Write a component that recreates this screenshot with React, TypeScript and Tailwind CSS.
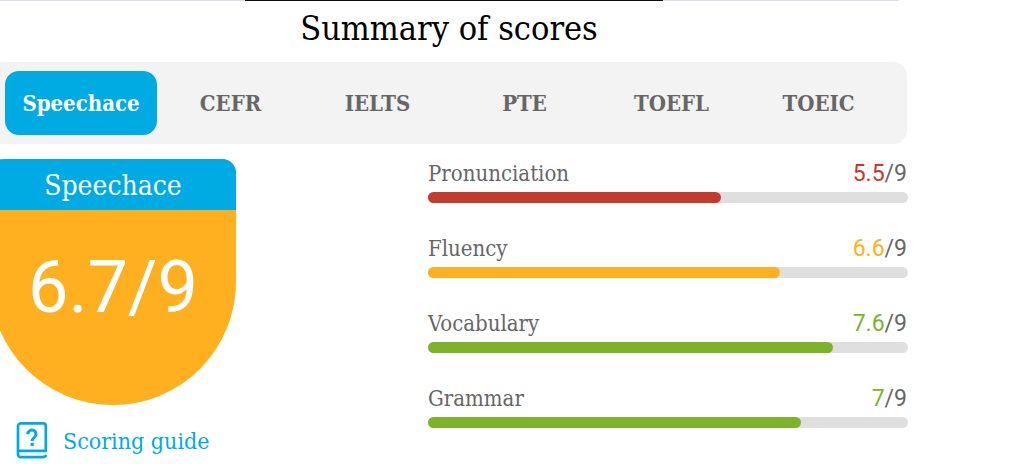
import { useState } from "react";

const tabs = ["Speechace", "CEFR", "IELTS", "PTE", "TOEFL", "TOEIC"];

const maxScore = 9;

const scores = [
  { name: "Pronunciation", value: 5.5, text: "text-[#c23b2c]", bar: "bg-[#c23b2c]" },
  { name: "Fluency", value: 6.6, text: "text-[#ffb020]", bar: "bg-[#ffb020]" },
  { name: "Vocabulary", value: 7.6, text: "text-[#7db32b]", bar: "bg-[#7db32b]" },
  { name: "Grammar", value: 7, text: "text-[#7db32b]", bar: "bg-[#7db32b]" },
];

function GuideIcon() {
  return (
    <svg
      width="32"
      height="38"
      viewBox="0 0 32 38"
      fill="none"
      stroke="currentColor"
      strokeWidth="2.7"
      strokeLinecap="round"
      aria-hidden="true"
    >
      <path d="M29.800 28.300V3.900a2.600 2.600 0 0 0-2.600-2.600H4.900A2.900 2.900 0 0 0 2 4.200v28a2.900 2.900 0 0 0 2.900 2.900h21.600c1.700 0 2.700-.4 3.400-1.200" />
      <path d="M2.500 28.900H29.500" />
      <path d="M11.800 12.200a4.100 4.100 0 1 1 6.600 3.200c-1.500 1.200-2.200 1.800-2.200 3.600" strokeWidth="3" strokeLinecap="butt" />
      <path d="M14.600 22.400h3.200" strokeWidth="3" strokeLinecap="butt" />
    </svg>
  );
}

export default function App() {
  const [active, setActive] = useState("Speechace");

  return (
    <div className="overflow-hidden bg-white font-['Roboto_Slab','DejaVu_Serif_Condensed','DejaVu_Serif',serif] text-[#666]">
      <main className="-ml-2.5 pr-[116px]">
        <div className="mr-[9px] flex h-px bg-[#dcdee8]">
          <div className="w-[255px]" />
          <div className="w-[418px] bg-[#100c0e]" />
        </div>
        <h1 className="flex h-[61px] items-center justify-center pb-2 text-[34px] leading-10 text-black">
          Summary of scores
        </h1>

        <nav className="mr-px flex rounded-[14px] bg-[#f3f3f3] px-[15px] py-[9px]" aria-label="Score scales">
          {tabs.map((tab) => (
            <button
              key={tab}
              type="button"
              aria-pressed={tab === active}
              onClick={() => setActive(tab)}
              className={
                "h-16 w-[147px] rounded-[14px] text-[22px] font-bold leading-8 first:w-[152px] " +
                (tab === active ? "bg-[#00abe3] text-white" : "text-[#666]")
              }
            >
              {tab}
            </button>
          ))}
        </nav>

        <div className="flex items-start justify-between pt-[15px]">
          <section className="w-[246px]">
            <div className="overflow-hidden rounded-t-[14px] rounded-b-[123px] bg-[#ffb020] text-center text-white">
              <h2 className="bg-[#00abe3] pt-[7px] pb-1 text-[28px] leading-10">Speechace</h2>
              <p className="pt-[38px] pb-[77px] font-['Roboto',sans-serif] text-[72px] leading-20">6.7/9</p>
            </div>
            <a href="#guide" className="mt-4 ml-[26px] flex items-center gap-[15px] text-[23px] leading-10 text-[#00abe3]">
              <GuideIcon />
              Scoring guide
            </a>
          </section>

          <section className="flex w-[480px] flex-col gap-8 pt-px">
            {scores.map((score) => (
              <div key={score.name}>
                <div className="flex h-8 items-center justify-between pr-px pb-1 leading-7">
                  <span className="text-[22px]">{score.name}</span>
                  <span className="font-['Roboto',sans-serif] text-[23px] leading-7">
                    <span className={score.text}>{score.value}</span>/{maxScore}
                  </span>
                </div>
                <div className="h-[11px] rounded-full bg-[#dfdfdf]">
                  <div
                    className={"h-full rounded-full " + score.bar}
                    style={{ width: `${(score.value / maxScore) * 100}%` }}
                  />
                </div>
              </div>
            ))}
          </section>
        </div>
      </main>
    </div>
  );
}
